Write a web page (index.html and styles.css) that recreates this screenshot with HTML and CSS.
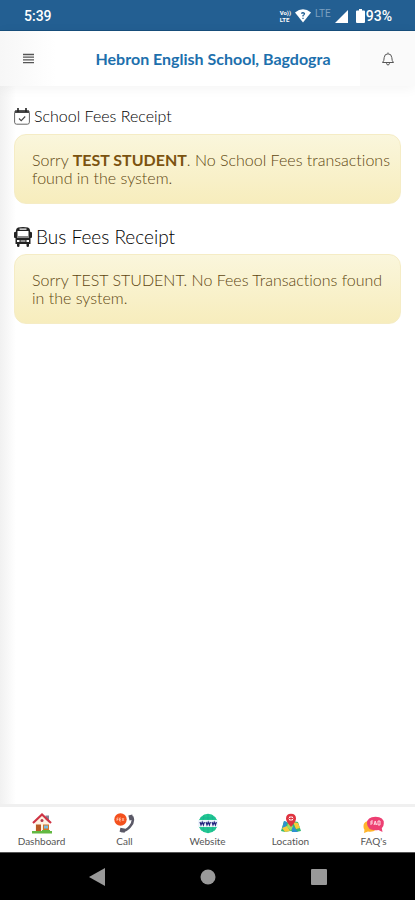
FILE: index.html
```html
<!DOCTYPE html>
<html lang="en">
<head>
<meta charset="utf-8">
<meta name="viewport" content="width=device-width, initial-scale=1">
<title>Fees Receipt</title>
<link rel="stylesheet" href="styles.css">
</head>
<body>
<div class="status">
  <span class="time">5:39</span>
  <div class="signals">
    <span class="volte"><span>Vo))</span><span>LTE</span></span>
    <svg width="16" height="14" viewBox="0 0 16 14"><path fill="#fff" d="M0 3.500Q8-3 16 3.500L8 13.500z"/><path d="M6.300 4.500Q8 3 9.500 4.500 9.500 6 8 6.500V7.500M8 8.800V10" fill="none" stroke="#235f92" stroke-width="1.200"/></svg>
    <span class="lte">LTE</span>
    <svg width="13" height="13" viewBox="0 0 13 13"><path fill="#fff" d="M13 0V13H0z"/></svg>
    <svg class="battery" width="9" height="14" viewBox="0 0 9 14"><path fill="#fff" d="M3 0h3v1.500h2q1 0 1 1V13q0 1-1 1H1q-1 0-1-1V2.500q0-1 1-1h2z"/></svg>
    <span class="percent">93%</span>
  </div>
</div>
<header class="header">
  <button class="icon-button" aria-label="Menu"><svg width="11" height="11" viewBox="0 0 11 11"><path d="M0 1.500h11M0 4.200h11M0 6.900h11M0 9.600h11" stroke="#555" stroke-width="1.300"/></svg></button>
  <h1>Hebron English School, Bagdogra</h1>
  <button class="icon-button bell" aria-label="Notifications"><svg width="14" height="14" viewBox="0 0 14 14" fill="none" stroke="#555" stroke-width="1"><path d="M7 .5v1M1.500 10.500Q3.200 9 3.200 5.500 3.500 1.800 7 1.800T10.800 5.500Q10.800 9 12.500 10.500zM5.500 11.200Q5.700 13 7 13T8.500 11.200"/></svg></button>
</header>
<main>
  <section>
    <h2><svg width="16" height="17" viewBox="0 0 16 17"><rect x=".6" y="2.500" width="14.800" height="13.700" rx="2" fill="none" stroke="#666"/><path d="M1 2.500h14v2.500H1z" fill="#444"/><path d="M4 0v4M12 0v4" stroke="#222" stroke-width="1.600"/><path d="M5 10.500l2.200 2.200 4-4.200" fill="none" stroke="#444" stroke-width="1.100"/></svg>School Fees Receipt</h2>
    <p class="alert">Sorry <strong>TEST STUDENT</strong>. No School Fees transactions found in the system.</p>
  </section>
  <section>
    <h2 class="large"><svg width="18" height="20" viewBox="0 0 18 20"><path fill="#222" fill-rule="evenodd" d="M4 .5Q9-.5 14 .5 16 1 16.200 4V5h1q.8 0 .8 1v4q0 1-1 1h-.5v6H15v2q0 1-1.200 1T12.500 19v-2h-7v2q0 1-1.200 1T3 19v-2H1.500v-6H1q-1 0-1-1V6q0-1 .8-1h1V4Q2 1 4 .5zM5.500 1.500v1.200h7V1.500zM3.500 4v7h11V4zM3 13v2h2.500v-2zm9.500 0v2H15v-2zM6.500 13.500v1h5v-1z"/><path fill="#888" d="M3.500 9h11v2h-11z"/></svg>Bus Fees Receipt</h2>
    <p class="alert">Sorry TEST STUDENT. No Fees Transactions found in the system.</p>
  </section>
</main>
<nav class="tabs">
  <a href="#dashboard"><svg width="20" height="21" viewBox="0 0 20 21"><path fill="#fff3e2" d="M3 9l7-6.500L17 9v10H3z"/><path fill="#858596" d="M13.500 2.500h3.500v7l-3.500-3z"/><path d="M1 10l9-8.500L19 10" fill="none" stroke="#cf3445" stroke-width="2.200"/><circle cx="10" cy="7.500" r="1.500" fill="#b73849"/><path fill="#b85b24" d="M4 11.500h5V19H4z"/><path fill="#d47728" d="M11 11.500h6V17h-6z"/><path fill="#77bee3" d="M12 12.500h4v3h-4z"/><path fill="#62b842" d="M0 18h20v2.500H0zM10 17h8v2h-8z"/></svg><span>Dashboard</span></a>
  <a href="#call"><svg width="21" height="21" viewBox="0 0 21 21"><path d="M18 3.500q2.500 5-2 10-4 5-9 4.500" fill="none" stroke="#5b5967" stroke-width="2.600"/><path d="M16.300 2l1.200 5M6 16.800l5 1" stroke="#5b5967" stroke-width="4"/><circle cx="6.500" cy="6.500" r="6.200" fill="#f4511e"/><path d="M3 5v3M3 5h1.500M3 6.500h1.500M7 5H5.500v3H7M5.500 6.500H7M8 5l2 3M10 5L8 8" stroke="#ffd0bc" stroke-width=".7" fill="none"/></svg><span>Call</span></a>
  <a href="#website"><svg width="20" height="21" viewBox="0 0 20 21"><circle cx="10" cy="10.500" r="9.700" fill="#22c990"/><path d="M10 1v19M2 5h16M2 16h16M6 2q-3 8 0 17M14 2q3 8 0 17" fill="none" stroke="#18aa95" stroke-width=".6"/><path fill="#eef5fc" d="M0 7h20v7H0z"/><path d="M2 9l1 3 1.200-3 1.200 3 1-3M8 9l1 3 1.200-3 1.200 3 1-3M14 9l1 3 1.200-3 1.200 3 1-3" fill="none" stroke="#23247f" stroke-width="1.200"/></svg><span>Website</span></a>
  <a href="#location"><svg width="20" height="21" viewBox="0 0 20 21"><path fill="#31b975" d="M3 8l4 1.500L12 8l5 1 3 9-5 1-6-1-5 1-4-1z"/><path fill="#2e91d1" d="M3 8l3 1-1 5-4 2zM11 12l6 7h-6z"/><path fill="#f8cc3d" d="M1 15l5-2 3 5-5 1zM12 9l5 1 2 5-4 1z"/><path fill="#a1df60" d="M7 10l5 3-2 5-4-4z"/><path fill="#df3340" d="M10 14Q5 8.500 5 5.500 5 .8 10 .8t5 4.700Q15 8.500 10 14z"/><circle cx="10" cy="5.500" r="2.300" fill="#fff"/><path d="M10 3.500v4M8 5.500h4" stroke="#df3340"/></svg><span>Location</span></a>
  <a href="#faqs"><svg width="21" height="21" viewBox="0 -3 21 21"><path fill="#ffb52c" d="M5 5Q0 6 .5 11q.2 2 1 2.700L1 17l4-1.500q5 1 8-2z"/><path fill="#ed3f72" d="M4 7.500Q4 .8 12.500.8T20.800 7.500q0 3-2 4.700L19.500 16l-4-2q-11 1.500-11.500-6.500z"/><path d="M8 5v4M8 5h2M8 7h2M11 9l1.200-4 1.300 4M11.500 8h2M15 5h2v4h-2z" fill="none" stroke="#ffd8e2" stroke-width="1"/></svg><span>FAQ's</span></a>
</nav>
<div class="system">
  <button aria-label="Back"><svg width="16" height="18" viewBox="0 0 16 18"><path fill="#999" d="M16 0v18L0 9z"/></svg></button>
  <button aria-label="Home"><svg width="16" height="16" viewBox="0 0 16 16"><circle cx="8" cy="8" r="7.500" fill="#999"/></svg></button>
  <button aria-label="Recent apps"><svg width="16" height="16" viewBox="0 0 16 16"><rect width="16" height="16" rx="1" fill="#999"/></svg></button>
</div>
</body>
</html>
```
FILE: styles.css
```css
* { box-sizing: border-box; }
body {
  margin: 0;
  min-height: 100vh;
  display: flex;
  flex-direction: column;
  background: #fff linear-gradient(90deg, #f1f1f1, #fff 16px);
  color: #000;
  font-family: Lato, "Open Sans", sans-serif;
  font-variant-ligatures: none;
}
h1, h2, p { margin: 0; }
button { border: 0; padding: 0; background: none; display: grid; place-items: center; }
svg { display: block; flex: none; }
.status {
  height: 31px;
  padding: 2px 23px 0 24px;
  display: flex;
  align-items: center;
  justify-content: space-between;
  background: #235f92;
  border-bottom: 1px solid #174f7c;
  color: #fff;
  font-family: Roboto, sans-serif;
  font-size: 14px;
  font-weight: 500;
}
.signals { display: flex; align-items: center; gap: 4px; }
.volte { display: grid; font-size: 6px; line-height: 7px; font-weight: 700; }
.lte { color: #7ca0c0; font-size: 10px; font-weight: 400; line-height: 12px; padding-bottom: 5px; }
.battery { margin-left: 4px; }
.percent { margin-left: -3px; }
.header {
  height: 55px;
  display: grid;
  grid-template-columns: 56px 1fr 55px;
  background: linear-gradient(90deg, #f7f7f7, #fff 56px);
  box-shadow: 0 2px 12px #0000000d;
}
.header h1 {
  align-self: center;
  padding-left: 10px;
  text-align: center;
  white-space: nowrap;
  color: #1d70ad;
  font-size: 16px;
  line-height: 20px;
  font-weight: 700;
}
.bell { background: #fafafa; }
main { flex: 1; padding: 20px 14px; }
section { margin-bottom: 20px; }
h2 {
  display: flex;
  align-items: center;
  gap: 4px;
  height: 28px;
  padding-bottom: 8px;
  font-size: 16px;
  line-height: 20px;
  font-weight: 300;
}
h2.large { font-size: 19px; height: 30px; padding-bottom: 4px; }
.alert {
  padding: 16px 7px 16px 17px;
  border: 1px solid #f5ecc5;
  border-radius: 12px;
  background: linear-gradient(#faf6dc, #f7edbd);
  color: #5e4610;
  font-size: 16px;
  line-height: 18px;
  font-weight: 300;
}
.alert strong { color: #7b5310; font-weight: 700; }
.tabs {
  height: 48px;
  display: grid;
  grid-template-columns: repeat(5, 1fr);
  background: #fff;
  border-top: 3px solid #f0f0f0;
}
.tabs a {
  display: flex;
  flex-direction: column;
  align-items: center;
  justify-content: space-between;
  padding: 6px 0 5px;
  color: #555;
  font-size: 10px;
  line-height: 12px;
  text-decoration: none;
}
.system {
  height: 48px;
  padding: 0 41px;
  display: grid;
  grid-template-columns: repeat(3, 1fr);
  background: #000;
  border-top: 1px solid #555;
}
```
